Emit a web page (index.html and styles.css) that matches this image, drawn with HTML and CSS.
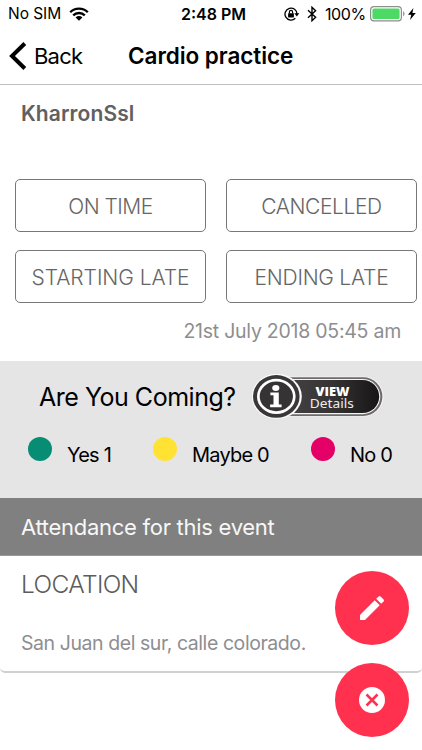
FILE: index.html
```html
<!DOCTYPE html>
<html lang="en">
<head>
<meta charset="utf-8">
<meta name="viewport" content="width=device-width, initial-scale=1">
<title>Cardio practice</title>
<link rel="stylesheet" href="styles.css">
</head>
<body>
<main class="screen">
  <div class="status">
    <div class="status-side">
      <span class="carrier">No SIM</span>
      <svg class="wifi" width="20" height="14" viewBox="0 0 20 14"><g fill="none" stroke="#000" stroke-width="2.3"><path d="M1.2 5.2a12.4 12.4 0 0 1 17.6 0"/><path d="M4.2 8.4a8.2 8.2 0 0 1 11.6 0"/></g><path d="M6.6 10.4a4.9 4.9 0 0 1 6.8 0L10 13.8z"/></svg>
    </div>
    <span class="clock">2:48 PM</span>
    <div class="status-side status-right">
      <svg class="lock" width="16" height="14" viewBox="0 0 16 14"><path d="M11.3 11.3A6 6 0 1 1 13 7" fill="none" stroke="#000" stroke-width="1.3"/><path d="M10.3 6.2h5L12.8 9.4z"/><rect x="4.1" y="6.2" width="5.8" height="4.2" rx=".6"/><path d="M5.4 6.5V5a1.6 1.6 0 0 1 3.2 0v1.5" fill="none" stroke="#000" stroke-width="1.2"/></svg>
      <svg class="bluetooth" width="10" height="16" viewBox="0 0 10 16"><path d="M1 4.3l7.6 7L5 14.7V1.3l3.6 3.4L1 11.7" fill="none" stroke="#000" stroke-width="1.4"/></svg>
      <span class="percent">100%</span>
      <svg class="battery" width="36" height="16" viewBox="0 0 36 16"><rect x=".6" y=".6" width="30.8" height="14.3" rx="3.4" fill="#fff" stroke="#8e8e8e" stroke-width="1.2"/><rect x="2.4" y="2.4" width="27.2" height="10.7" rx="1.6" fill="#4cd964"/><path d="M33 5.3c2.1.7 2.1 4.2 0 4.9z" fill="#999"/></svg>
      <svg class="bolt" width="8" height="12" viewBox="0 0 8 12"><path d="M5.4 0L0 6.8h3.3L2 12l5.8-7H4.4z"/></svg>
    </div>
  </div>
  <header class="nav">
    <a class="back"><svg width="18" height="28" viewBox="0 0 18 28"><path d="M15.8 1.5L3 14l12.8 12.5" fill="none" stroke="#000" stroke-width="4"/></svg><span>Back</span></a>
    <h1 class="title">Cardio practice</h1>
  </header>
  <section class="event">
    <h2 class="team">KharronSsl</h2>
    <div class="actions">
      <button class="action on-time"><span>ON TIME</span></button>
      <button class="action cancelled"><span>CANCELLED</span></button>
      <button class="action starting"><span>STARTING LATE</span></button>
      <button class="action ending"><span>ENDING LATE</span></button>
    </div>
    <p class="date"><span>21st July 2018 05:45 am</span></p>
  </section>
  <section class="coming">
    <div class="question">
      <span class="ask">Are You Coming?</span>
      <svg class="view" width="134" height="46" viewBox="0 0 134 46">
        <defs><linearGradient id="pill" x1="0" x2="1" y1="0" y2="0"><stop offset="0" stop-color="#494748"/><stop offset=".55" stop-color="#353334"/><stop offset="1" stop-color="#171516"/></linearGradient></defs>
        <rect x="20" y="2.6" width="111.6" height="40" rx="20" fill="#f4f4f4"/>
        <rect x="20" y="3.3" width="110.4" height="38.6" rx="19.3" fill="#6d6b6c"/>
        <rect x="20" y="5" width="108.3" height="35.2" rx="17.6" fill="#f4f4f4"/>
        <rect x="20" y="6" width="107.2" height="33" rx="16.5" fill="url(#pill)"/>
        <ellipse cx="24.8" cy="22.4" rx="25" ry="22.6" fill="#fafafa"/>
        <ellipse cx="24.3" cy="22.4" rx="23.3" ry="21.4" fill="#393738"/>
        <ellipse cx="24.3" cy="22.4" rx="19.3" ry="17.6" fill="#fff"/>
        <ellipse cx="24.3" cy="22.4" rx="16.6" ry="14.8" fill="#353334"/>
        <ellipse cx="23.8" cy="14" rx="3.6" ry="2.9" fill="#fff"/>
        <path d="M18.4 18.6h8.4v12h2.8v2.6H18.1v-2.6h3.4v-9.4h-3.1z" fill="#fff"/>
        <text class="view-strong" x="63.5" y="22" textLength="34" lengthAdjust="spacingAndGlyphs">VIEW</text>
        <text class="view-light" x="57.8" y="34" textLength="44" lengthAdjust="spacingAndGlyphs">Details</text>
      </svg>
    </div>
    <ul class="answers">
      <li class="yes"><i class="dot"></i><span>Yes 1</span></li>
      <li class="maybe"><i class="dot"></i><span>Maybe 0</span></li>
      <li class="no"><i class="dot"></i><span>No 0</span></li>
    </ul>
  </section>
  <h2 class="attendance"><span>Attendance for this event</span></h2>
  <section class="location">
    <h3 class="place-title">LOCATION</h3>
    <p class="place">San Juan del sur, calle colorado.</p>
  </section>
  <div class="fabs">
    <button class="fab" aria-label="Edit"><svg width="32" height="32" viewBox="0 0 24 24"><path fill="#fff" d="M3 17.25V21h3.75L17.81 9.94l-3.75-3.75zM20.71 7.04a1 1 0 0 0 0-1.41l-2.34-2.34a1 1 0 0 0-1.41 0l-1.83 1.83 3.75 3.75z"/></svg></button>
    <button class="fab" aria-label="Cancel"><svg width="26" height="26" viewBox="0 0 26 26"><circle cx="13" cy="13" r="13" fill="#fff"/><path d="M7.5 7.5l11 11m0-11l-11 11" stroke="#ff314f" stroke-width="2.5"/></svg></button>
  </div>
</main>
</body>
</html>
```
FILE: styles.css
```css
* { box-sizing: border-box; }
body { margin: 0; background: #fff; color: #000; font-family: Inter, "Liberation Sans", sans-serif; }
h1, h2, h3, p, ul { margin: 0; padding: 0; font-weight: 400; }
button { padding: 0; font-family: inherit; border: 0; background: none; }
svg { display: block; flex: none; }
span, h1, h2, h3, p { white-space: nowrap; }
.screen { position: relative; width: 422px; height: 750px; overflow: hidden; }

.status { display: grid; grid-template-columns: 181px 66px 175px; align-items: center; height: 28px; line-height: 28px; font-size: 16px; }
.status-side { display: flex; align-items: center; padding-left: 8px; }
.carrier { width: 61px; font-size: 15.5px; letter-spacing: -.05px; }
.clock { font-size: 16px; font-weight: 600; }
.status-right { padding-left: 37px; }
.bluetooth { margin-left: 7px; }
.percent { width: 40px; margin-left: 8px; letter-spacing: -.4px; }
.battery { margin-left: 5px; }
.bolt { margin-left: 2px; }

.nav { display: flex; align-items: center; height: 57px; padding-bottom: 1px; border-bottom: 1px solid #bebebe; }
.back { display: flex; align-items: center; width: 128px; padding-left: 9px; font-size: 22px; letter-spacing: -.8px; }
.back span { margin-left: 7px; }
.title { font-size: 22.5px; font-weight: 600; letter-spacing: -.06px; }

.event { height: 276px; padding-top: 14px; color: #606060; }
.team { padding-left: 21px; font-size: 21px; font-weight: 600; line-height: 30px; letter-spacing: .1px; }
.actions { display: grid; grid-template-columns: 191px 191px; grid-template-rows: 53px 53px; gap: 18px 20px; margin: 50px 0 0 15px; }
.action { padding-top: 2px; border: 1.5px solid #777; border-radius: 5px; color: #666; font-size: 21px; font-weight: 350; }
.on-time { letter-spacing: -.5px; }
.cancelled { letter-spacing: -.4px; }
.starting { letter-spacing: -.05px; }
.ending { letter-spacing: -.25px; }
.date { margin: 14px 21px 0 0; text-align: right; font-size: 19.5px; line-height: 28px; letter-spacing: -.25px; color: #8e8e90; }

.coming { height: 137px; padding-top: 13px; background: #e5e5e5; }
.question { display: flex; height: 46px; }
.ask { width: 213px; margin-left: 39px; font-size: 25px; line-height: 46px; letter-spacing: -.48px; }
.view-strong { fill: #fff; font: 800 12.5px "Open Sans", sans-serif; }
.view-light { fill: #eee; font: 400 12px "Noto Sans", sans-serif; }
.answers { display: grid; grid-template-columns: 125px 158px 100px; margin: 17px 0 0 28px; list-style: none; font-size: 20px; letter-spacing: -.8px; }
.answers li { display: flex; height: 34px; line-height: 36px; }
.dot { width: 24px; height: 24px; margin-right: 15px; border-radius: 50%; }
.yes .dot { background: #078d73; }
.maybe .dot { background: #ffe234; }
.no .dot { background: #e40066; }

.attendance { height: 58px; padding-left: 21px; color: #f7f7f7; background: #808080; border-bottom: 1px solid #999; font-size: 22px; line-height: 58px; letter-spacing: -.28px; }
.location { height: 117px; padding: 10px 0 0 21px; border-bottom: 2px solid #d0d0d0; border-radius: 0 0 5px 5px; }
.place-title { color: #5c5c5c; font-size: 24.5px; font-weight: 350; line-height: 36px; letter-spacing: -.65px; }
.place { margin-top: 27px; color: #8e8e90; font-size: 19.5px; line-height: 28px; letter-spacing: -.43px; }

.fabs { position: absolute; left: 335px; top: 570.5px; display: grid; gap: 18.5px; }
.fab { display: grid; place-items: center; width: 74px; height: 74px; border-radius: 50%; background: #ff314f; }
```
